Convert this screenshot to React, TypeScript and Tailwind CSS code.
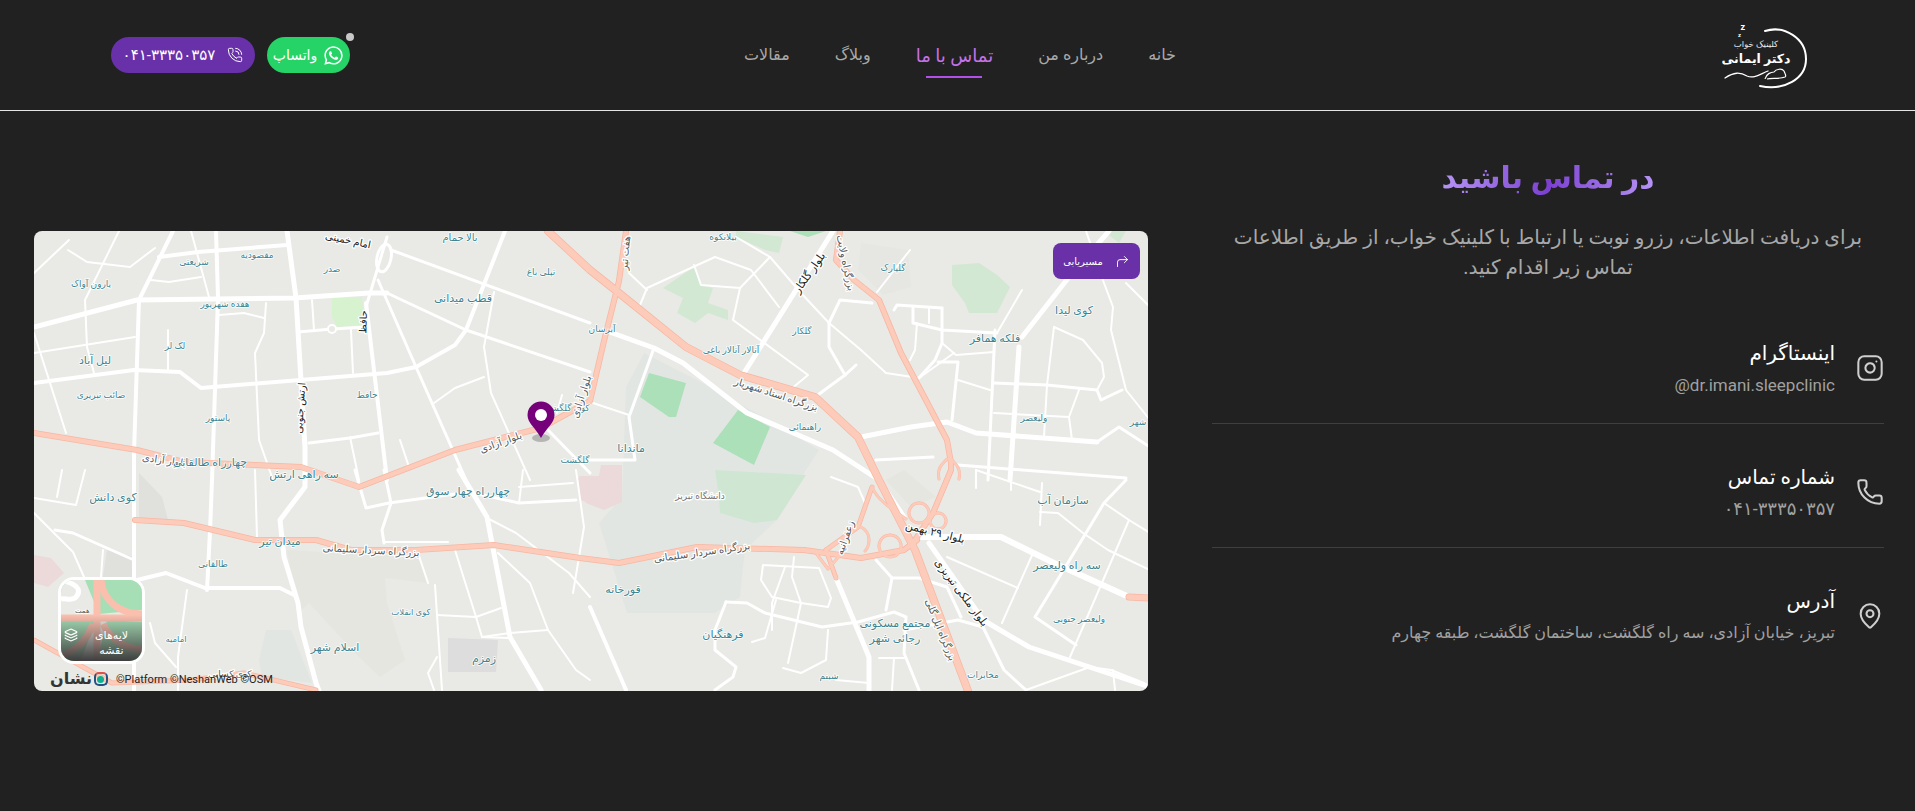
import { CornerUpRight, Instagram, Layers, MapPin, Phone, PhoneCall } from "lucide-react";
import { IoLogoWhatsapp } from "react-icons/io5";

const navItems = ["خانه", "درباره من", "تماس با ما", "وبلاگ", "مقالات"];

// map data: [fill, points]
const areas: [string, string][] = [
  ["#e2e6e3", "610,122 663,149 735,189 785,219 772,239 743,289 711,319 706,366 681,382 593,382 565,292 588,266 592,156"],
  ["#abe0b8", "615,142 652,152 642,186 635,186 606,166"],
  ["#abe0b8", "704,179 736,196 720,234 679,212"],
  ["#cfe6d2", "681,239 772,244 743,289 720,292 686,282 685,267"],
  ["#ecd9d9", "567,234 588,234 588,271 570,279 552,272 545,245 565,245"],
  ["#d2e8d3", "629,57 660,36 667,54 679,57 674,72 694,79 694,89 674,82 661,92 643,82 649,67"],
  ["#d2e8d3", "702,0 749,6 745,22 731,19 702,6"],
  ["#abe0b8", "756,0 792,0 774,6"],
  ["#d2e8d3", "918,34 945,32 963,44 976,56 963,82 935,82 931,72 918,54"],
  ["#d2e8d3", "1070,0 1092,0 1085,12"],
  ["#d6f2cf", "298,67 328,66 330,94 303,96 298,86"],
  ["#e6e7e2", "827,12 874,19 877,56 849,64 824,39"],
  ["#e6e6e1", "852,249 870,239 902,266 877,276"],
  ["#ecd9d9", "0,324 17,327 30,342 14,356 0,352"],
  ["#e0e0dd", "73,319 100,326 101,346 69,346"],
  ["#e0e0dd", "105,242 128,266 134,289 105,287"],
  ["#e6e6e1", "253,319 384,326 394,352 351,347 353,372 371,429 346,446 328,429 275,372 264,382"],
  ["#e1e6e3", "232,399 257,399 278,452 228,446 225,429"],
  ["#dddddd", "414,407 464,409 462,441 414,441"],
  ["#ecd9d9", "542,246 556,249 556,272 546,269"],
];

// white streets: [width, points]
const roads: [number, string][] = [
  [5, "0,96 103,69 260,67 335,62 353,62"],
  [3, "353,62 432,99 556,141"],
  [5, "253,0 262,67 271,216 271,256 246,289 250,326 264,372 267,396 282,452 285,460"],
  [4, "139,0 105,69 100,222 100,346 100,460"],
  [4, "0,152 100,139 146,141 167,157 353,142 382,136 421,114 432,99 471,0"],
  [3, "357,19 556,92"],
  [3, "344,49 382,136 432,249"],
  [4, "332,72 353,249"],
  [3, "353,6 332,76"],
  [4, "182,0 184,67 178,249 176,300 173,359"],
  [2, "0,122 101,106"],
  [2, "0,102 32,202"],
  [4, "125,26 164,21 253,14"],
  [2, "34,19 53,31 96,36 121,17"],
  [2, "0,42 35,9"],
  [2, "117,49 135,51 167,46"],
  [2, "85,0 51,69 53,116 60,142"],
  [2, "157,0 175,66"],
  [2, "185,84 210,82 230,87"],
  [2, "232,72 230,102 221,122 225,209 239,249"],
  [3, "264,101 298,98 332,96"],
  [2, "278,69 280,99"],
  [2, "317,99 319,142"],
  [3, "275,212 316,207 344,202"],
  [2, "316,206 325,249"],
  [2, "366,209 375,236"],
  [2, "400,172 421,157 450,146"],
  [2, "460,61 450,116 457,162 496,249"],
  [3, "514,199 556,242"],
  [2, "528,164 523,182"],
  [2, "134,99 134,139"],
  [5, "570,99 620,117 649,132 713,182 799,219 845,249 870,286"],
  [5, "895,312 949,389 995,416 1116,456"],
  [5, "799,0 710,142"],
  [3, "620,117 595,186 601,229 556,229"],
  [2, "556,171 595,184"],
  [5, "827,206 877,196 913,191 942,202 1063,211"],
  [3, "1063,211 1085,196 1116,216"],
  [3, "842,229 899,226"],
  [3, "924,234 1092,247"],
  [5, "985,116 976,249"],
  [3, "961,99 954,249"],
  [5, "988,106 1035,46 1075,0"],
  [3, "838,72 806,69 795,92 795,116 811,144"],
  [2, "795,92 827,119 852,142 885,147 920,122"],
  [3, "811,144 781,166"],
  [3, "811,144 822,134"],
  [2, "702,6 736,26 767,62 795,92"],
  [2, "736,26 706,57 699,89 774,144 756,159"],
  [2, "604,79 613,57 681,26 717,39 745,76"],
  [2, "660,34 667,54 706,57"],
  [2, "595,42 613,59"],
  [2, "876,19 843,61"],
  [3, "860,79 863,74 908,77"],
  [3, "879,77 879,92 908,99 963,102"],
  [2, "895,77 895,92"],
  [2, "883,92 881,119 876,129"],
  [3, "908,77 908,112 901,129 885,147"],
  [2, "908,112 922,124 960,121"],
  [3, "904,131 924,131 918,189"],
  [2, "924,149 956,159"],
  [3, "960,152 1013,154 1063,159 1067,169 1088,159"],
  [2, "960,182 1035,186"],
  [2, "1013,154 1010,206"],
  [2, "1045,159 1035,186 1038,209"],
  [2, "1020,96 1013,154"],
  [2, "1020,96 1049,109 1068,132 1070,146 1063,159"],
  [2, "963,102 988,59"],
  [2, "1052,0 1070,52 1079,76 1077,99 1092,159 1116,189"],
  [2, "1092,52 1116,76"],
  [2, "797,246 824,256 831,272"],
  [3, "842,329 858,347 852,379"],
  [3, "858,347 885,347 913,356 927,386"],
  [5, "802,347 835,426 835,459"],
  [2, "729,334 785,337 797,367 794,376 767,372 738,366 727,349 729,334"],
  [2, "751,336 738,372 738,399"],
  [2, "760,326 758,346 767,372 754,432"],
  [4, "556,376 592,459"],
  [3, "692,371 713,372 731,382 788,396 824,391 860,381 872,386 870,422 885,459"],
  [3, "692,371 681,399 681,419 702,436 699,446 681,459"],
  [2, "718,411 731,407 742,369"],
  [2, "794,399 792,429 767,442 749,437"],
  [2, "802,449 835,452"],
  [2, "845,427 870,427"],
  [2, "860,427 858,459"],
  [3, "870,399 924,389 949,396 970,439 992,459"],
  [2, "913,326 984,357"],
  [2, "999,322 968,392"],
  [2, "942,239 1006,261"],
  [2, "942,239 942,257"],
  [2, "977,242 977,259"],
  [2, "1008,252 1006,294"],
  [2, "1006,281 1024,282 1049,302 1074,319 1116,339"],
  [3, "1092,249 1070,272 1052,302 1001,386 1042,414"],
  [2, "1070,272 1095,289 1116,302"],
  [2, "1095,289 1036,426"],
  [2, "992,459 1056,436 1077,439 1110,452"],
  [2, "1079,439 1081,459"],
  [2, "0,267 42,274 51,239"],
  [2, "28,239 23,266"],
  [2, "0,282 39,321 50,346"],
  [3, "21,299 39,302 100,329"],
  [2, "69,319 67,346"],
  [4, "103,349 132,342 171,357 246,357 260,364"],
  [2, "153,359 144,426 144,459"],
  [2, "116,392 121,412 142,436"],
  [2, "221,239 223,306"],
  [3, "321,239 332,277 355,272 435,261 485,272 542,269"],
  [3, "350,239 357,272 348,299 350,312"],
  [5, "425,239 453,286 476,406 507,459"],
  [2, "453,287 482,302 535,342 556,366"],
  [2, "464,322 496,352 514,399 542,439 556,449"],
  [2, "350,311 414,311"],
  [2, "384,322 394,352"],
  [2, "401,354 408,459"],
  [2, "421,319 442,386 448,406 475,407"],
  [2, "403,384 442,386 467,377"],
  [2, "448,406 476,402 514,399"],
  [2, "403,426 394,442 400,459"],
  [2, "542,239 550,296 539,362"],
  [2, "489,239 485,272"],
  [2, "539,252 485,256"],
  [6, "888,306 967,306 1020,332 1095,366"],
];

const highways: [number, string][] = [
  [5, "0,202 103,219 150,231 267,236 325,256 421,219 507,197 556,170 570,110 585,50 592,0"],
  [7, "514,0 556,39 585,62 652,116 706,144 781,166 824,206 845,249 881,319 934,460"],
  [5, "806,0 802,29 820,49 845,69 867,122 913,209 917,232 917,239 899,282 881,309"],
  [5, "101,289 150,292 221,309 282,309 317,319 382,319 460,314 546,327 585,332 663,316 770,319 827,327 870,319 883,309"],
  [4, "792,319 802,347"],
  [4, "792,319 824,296 838,256"],
  [4, "0,409 78,452 157,449 210,442 282,459"],
  [6, "1095,366 1116,367"],
];

const loops = [
  "M885 272a10 10 0 1 0 .1 0",
  "M904 282a8 8 0 1 0 .1 0",
  "M856 304a11 11 0 1 0 .1 0",
  "M827 296c12 6 8 20 4 24",
  "M838 256c6 14 20 22 34 32",
  "M782 322l12 16 14-16",
  "M913 228c-6 6-10 10-8 20",
  "M917 228c6 6 10 10 8 20",
];

// [text, x, y, size, rotation, color]
const teal = "#3c8490";
const ink = "#222222";
const mute = "#55595a";
const labels: [string, number, number, number, number, string][] = [
  ["امام خمینی", 314, 10, 10, 12, ink],
  ["بالا حمام", 426, 7, 10, 0, teal],
  ["شریعتی", 160, 32, 9, 0, teal],
  ["مقصودیه", 223, 25, 9, 0, teal],
  ["صدر", 298, 39, 9, 0, teal],
  ["تپلی باغ", 507, 42, 9, 0, teal],
  ["یارون آواک", 57, 54, 9, 0, teal],
  ["قطب میدانی", 429, 68, 11, 0, teal],
  ["هفده شهریور", 191, 74, 9, 0, teal],
  ["حافظ", 330, 91, 10, -88, ink],
  ["لک لر", 141, 116, 9, 0, teal],
  ["لیل آباد", 61, 130, 11, 0, teal],
  ["صائب تبریزی", 67, 165, 9, 0, teal],
  ["حافظ", 333, 165, 9, 0, teal],
  ["پاستور", 184, 188, 9, 0, teal],
  ["ارتش جنوبی", 267, 177, 10, -86, ink],
  ["کوی گلگشت", 532, 178, 9, 0, teal],
  ["بلوار آزادی", 467, 212, 10, -20, mute],
  ["بلوار آزادی", 548, 166, 10, -72, mute],
  ["بلوار آزادی", 130, 230, 10, 8, mute],
  ["چهارراه طالقانی", 176, 232, 11, 0, teal],
  ["سه راهی ارتش", 270, 244, 11, 0, teal],
  ["گلگشت", 541, 230, 9, 0, teal],
  ["کوی دانش", 79, 267, 11, 0, teal],
  ["چهارراه چهار سوق", 434, 261, 11, 0, teal],
  ["میدان تیر", 246, 311, 11, 0, teal],
  ["بزرگراه سردار سلیمانی", 337, 320, 10, 3, mute],
  ["طالقانی", 179, 334, 9, 0, teal],
  ["کوی انقلاب", 377, 382, 8.5, 0, teal],
  ["امامیه", 142, 409, 8.5, 0, teal],
  ["اسلام شهر", 301, 417, 11, 0, teal],
  ["زمزم", 450, 428, 11, 0, teal],
  ["کوی کسایی", 196, 444, 9, 0, mute],
  ["بیلانکوه", 689, 7, 9, 0, teal],
  ["بزرگراه ولایت", 811, 32, 10, 78, mute],
  ["هفت تیر", 592, 22, 10, -85, mute],
  ["بلوار گلکار", 776, 42, 11, -55, ink],
  ["گلپارک", 859, 38, 9, 0, teal],
  ["کوی لیدا", 1040, 80, 11, 0, teal],
  ["آبرسان", 568, 99, 9, 0, teal],
  ["گلکار", 768, 101, 9, 0, teal],
  ["فلکه همافر", 961, 108, 11, 0, teal],
  ["آتالار آتالار باغی", 697, 120, 9, 0, teal],
  ["بزرگراه استاد شهریار", 742, 164, 10, 18, mute],
  ["راهنمائی", 771, 197, 9, 0, teal],
  ["ولیعصر", 1000, 188, 9, 0, teal],
  ["شهر", 1104, 192, 9, 0, teal],
  ["ماندانا", 597, 218, 11, 0, teal],
  ["دانشگاه تبریز", 666, 266, 9, 0, "#6f7272"],
  ["سازمان آب", 1029, 270, 11, 0, teal],
  ["بلوار ۲۹ بهمن", 901, 302, 11, 14, ink],
  ["زعفرانیه", 812, 307, 10, -70, mute],
  ["بزرگراه سردار سلیمانی", 668, 322, 10, -8, mute],
  ["سه راه ولیعصر", 1033, 335, 11, 0, teal],
  ["بلوار ملکی تبریزی", 927, 362, 11, 53, ink],
  ["قورخانه", 589, 359, 11, 0, teal],
  ["ولیعصر جنوبی", 1045, 389, 9, 0, teal],
  ["بزرگراه ایل گلی", 906, 399, 10, 68, mute],
  ["مجتمع مسکونی", 861, 393, 11, 0, teal],
  ["رجائی شهر", 861, 408, 11, 0, teal],
  ["فرهنگیان", 689, 404, 11, 0, teal],
  ["مخابرات", 949, 445, 9, 0, teal],
  ["شبنم", 795, 446, 9, 0, teal],
];

const contactRows = [
  { title: "اینستاگرام", sub: "@dr.imani.sleepclinic", subClass: "text-[17px]", subDir: "ltr", Icon: Instagram },
  { title: "شماره تماس", sub: "۰۴۱-۳۳۳۵۰۳۵۷", subClass: "text-[18px]", subDir: "rtl", Icon: Phone },
  { title: "آدرس", sub: "تبریز، خیابان آزادی، سه راه گلگشت، ساختمان گلگشت، طبقه چهارم", subClass: "text-[16px]", subDir: "rtl", Icon: MapPin },
];

function Logo() {
  return (
    <svg width="85" height="67" viewBox="0 0 85 67" className="shrink-0" fill="none">
      <path d="M43 9C62 3 84 16 84 37C84 57 62 69 38 64" stroke="#fff" strokeWidth="2" strokeLinecap="round" />
      <path d="M3 56C12 50 18 50 25 54C32 57 38 52 46 49" stroke="#fff" strokeWidth="1.3" strokeLinecap="round" />
      <path d="M43 57C44 52 49 50 52 50C54 47 60 46 62 49C63 52 65 54 63 55C58 57 50 56 45 57" stroke="#fff" strokeWidth="1.2" />
      <text x="23" y="8" fill="#fff" fontSize="9" fontWeight="700">z</text>
      <text x="19" y="15" fill="#fff" fontSize="6" fontWeight="700">z</text>
      <text x="34" y="25" fill="#e8e8e8" fontSize="8.5" textAnchor="middle">کلینیک خواب</text>
      <text x="34" y="41" fill="#fff" fontSize="12.5" fontWeight="700" textAnchor="middle">دکتر ایمانی</text>
    </svg>
  );
}

function MapDrawing() {
  return (
    <svg viewBox="0 0 1114 460" className="block h-full w-full" fill="none" strokeLinejoin="round" strokeLinecap="round">
      <rect width="1114" height="460" fill="#e9eae5" />
      {areas.map(([fill, pts]) => (
        <polygon key={pts} points={pts} fill={fill} />
      ))}
      {roads.map(([w, pts]) => (
        <polyline key={pts} points={pts} stroke="#fff" strokeWidth={w} />
      ))}
      <circle cx="298" cy="98" r="4" stroke="#fff" strokeWidth="2" fill="#e9eae5" />
      <ellipse cx="350" cy="27" rx="7" ry="14" stroke="#fff" strokeWidth="3" transform="rotate(12 350 27)" />
      {highways.map(([w, pts]) => (
        <polyline key={pts} points={pts} stroke="#f8b7a3" strokeWidth={w + 1} />
      ))}
      {loops.map((d) => (
        <path key={d} d={d} stroke="#f8b7a3" strokeWidth="3" />
      ))}
      {highways.map(([w, pts]) => (
        <polyline key={"in" + pts} points={pts} stroke="#fdcbb9" strokeWidth={w - 0.5} />
      ))}
      {loops.map((d) => (
        <path key={"in" + d} d={d} stroke="#fdcbb9" strokeWidth="2.2" />
      ))}
      {labels.map(([text, x, y, size, rot, color]) => (
        <text
          key={text + x}
          x={x}
          y={y}
          fontSize={size}
          fill={color}
          stroke="#ffffff"
          strokeWidth={color === teal ? 1.5 : 2.5}
          paintOrder="stroke"
          textAnchor="middle"
          dominantBaseline="middle"
          transform={rot ? `rotate(${rot} ${x} ${y})` : undefined}
        >
          {text}
        </text>
      ))}
      <ellipse cx="507" cy="207" rx="9" ry="4" fill="#8a8a8a" opacity="0.55" />
      <path d="M507 207C501 196 493.5 192 493.5 184a13.5 13.5 0 0 1 27 0C520.5 192 513 196 507 207Z" fill="#75007a" />
      <circle cx="507" cy="184" r="6" fill="#fff" />
    </svg>
  );
}

function LayerTile() {
  return (
    <div className="absolute bottom-[27px] left-[24px] h-[87px] w-[87px] overflow-hidden rounded-2xl border-[3px] border-white bg-[#a6dfb6]">
      <svg viewBox="0 0 81 81" className="absolute inset-0 h-full w-full" fill="none">
        <rect width="81" height="81" fill="#e9eae5" />
        <path d="M24 0L81 0L81 30L38 34Z" fill="#a6dfb6" />
        <path d="M0 36L36 36L20 81L0 81Z" fill="#a6dfb6" />
        <path d="M46 40L81 42L81 81L36 81Z" fill="#a6dfb6" />
        <path d="M0 0C16 4 22 10 14 18C10 21 4 18 0 19" stroke="#fff" strokeWidth="5" />
        <g stroke="#fbbfae" strokeWidth="7">
          <path d="M36 0V81" />
          <path d="M0 38H81" />
          <path d="M40 0C42 22 60 34 81 34" />
          <path d="M32 44C26 60 14 72 0 76" />
          <path d="M42 44C50 60 64 68 81 70" />
        </g>
        <text x="14" y="33" fontSize="7" fill="#555" stroke="#fff" strokeWidth="1.5" paintOrder="stroke">همت</text>
      </svg>
      <div className="absolute inset-x-0 bottom-0 h-[46px] bg-linear-to-b from-transparent to-[#3e3e3e]" />
      <Layers size={14} className="absolute bottom-[19px] left-[3px] text-white" />
      <div className="absolute bottom-[3px] left-[22px] right-[2px] text-center text-[11px] leading-[15px] text-white">
        لایه‌های نقشه
      </div>
    </div>
  );
}

function MapCard() {
  return (
    <div className="relative h-[460px] w-[1114px] shrink-0 overflow-hidden rounded-lg" dir="ltr">
      <MapDrawing />
      <button className="absolute right-2 top-3 flex h-9 w-[87px] items-center justify-center gap-3 rounded-lg bg-[#6930a8] text-white" dir="rtl">
        <CornerUpRight size={15} strokeWidth={1.5} />
        <span className="text-[10px]">مسیریابی</span>
      </button>
      <LayerTile />
      <div className="absolute bottom-[4px] left-[16px] flex items-center gap-2">
        <div className="flex items-center gap-[2px]">
          <span className="text-[16px] font-bold leading-none text-[#333]">نشان</span>
          <span className="flex h-[14px] w-[14px] items-center justify-center rounded-[5px] border-2 border-[#28517f] border-t-[#d9534f]">
            <span className="h-[7px] w-[7px] rounded-full bg-[#0eb08f]" />
          </span>
        </div>
        <span className="text-[11px] leading-none text-[#222]">©Platform ©NeshanWeb ©OSM</span>
      </div>
    </div>
  );
}

export default function App() {
  return (
    <div dir="rtl" className="min-h-screen bg-[#212121] font-['Roboto','DejaVu_Sans',sans-serif]">
      <header className="flex h-[111px] items-center border-b border-[#e5e5e5] pl-[111px] pr-[108px]">
        <Logo />
        <nav className="mr-[546px] flex items-center gap-[45px]">
          {navItems.map((item, i) => (
            <a
              key={item}
              className={
                i === 2
                  ? "relative text-[18px] text-[#c671e8] after:absolute after:-bottom-[9px] after:left-1/2 after:h-[2px] after:w-[56px] after:-translate-x-1/2 after:bg-[#b24fe8]"
                  : "text-[16px] text-[#a9a9a9]"
              }
            >
              {item}
            </a>
          ))}
        </nav>
        <div className="mr-auto flex items-center gap-3">
          <a className="relative flex h-9 w-[83px] items-center justify-center gap-[6px] rounded-full bg-[#25d366] text-[14px] text-white">
            <IoLogoWhatsapp size={21} />
            واتساپ
            <span className="absolute -right-1 -top-1 h-2 w-2 rounded-full bg-[#c8c8c8]" />
          </a>
          <a className="flex h-9 w-[144px] items-center justify-center gap-3 rounded-full bg-[#6931a9] text-[15px] text-white">
            <PhoneCall size={16} strokeWidth={1.5} />
            ۰۴۱-۳۳۳۵۰۳۵۷
          </a>
        </div>
      </header>

      <main className="flex items-start gap-16 pl-[34px] pr-[31px]">
        <section className="w-[672px] shrink-0 pt-[42px]">
          <h1 className="mx-auto w-fit bg-linear-to-r from-[#b794f4] via-[#7c3fd1] to-[#b794f4] bg-clip-text text-[30px] font-bold leading-[50px] text-transparent">
            در تماس باشید
          </h1>
          <p className="mt-[19px] px-[20px] text-center text-[20px] leading-[30px] text-[#a8a8a8]">
            برای دریافت اطلاعات، رزرو نوبت یا ارتباط با کلینیک خواب، از طریق اطلاعات تماس زیر اقدام کنید.
          </p>
          <div className="mt-[18px]">
            {contactRows.map(({ title, sub, subClass, subDir, Icon }, i) => (
              <div key={title} className={i < 2 ? "h-[124px] border-b border-[#46307a] pt-[38px]" : "h-[124px] pt-[38px]"}>
                <div className="flex items-center gap-[21px]">
                  <Icon size={28} strokeWidth={1.75} className="shrink-0 text-[#cfcfcf]" />
                  <div>
                    <div className="text-[20px] leading-[30px] text-white">{title}</div>
                    <div dir={subDir} className={`mt-[5px] text-right leading-[24px] text-[#a0a0a0] ${subClass}`}>{sub}</div>
                  </div>
                </div>
              </div>
            ))}
          </div>
        </section>
        <div className="mt-[120px]">
          <MapCard />
        </div>
      </main>
    </div>
  );
}
